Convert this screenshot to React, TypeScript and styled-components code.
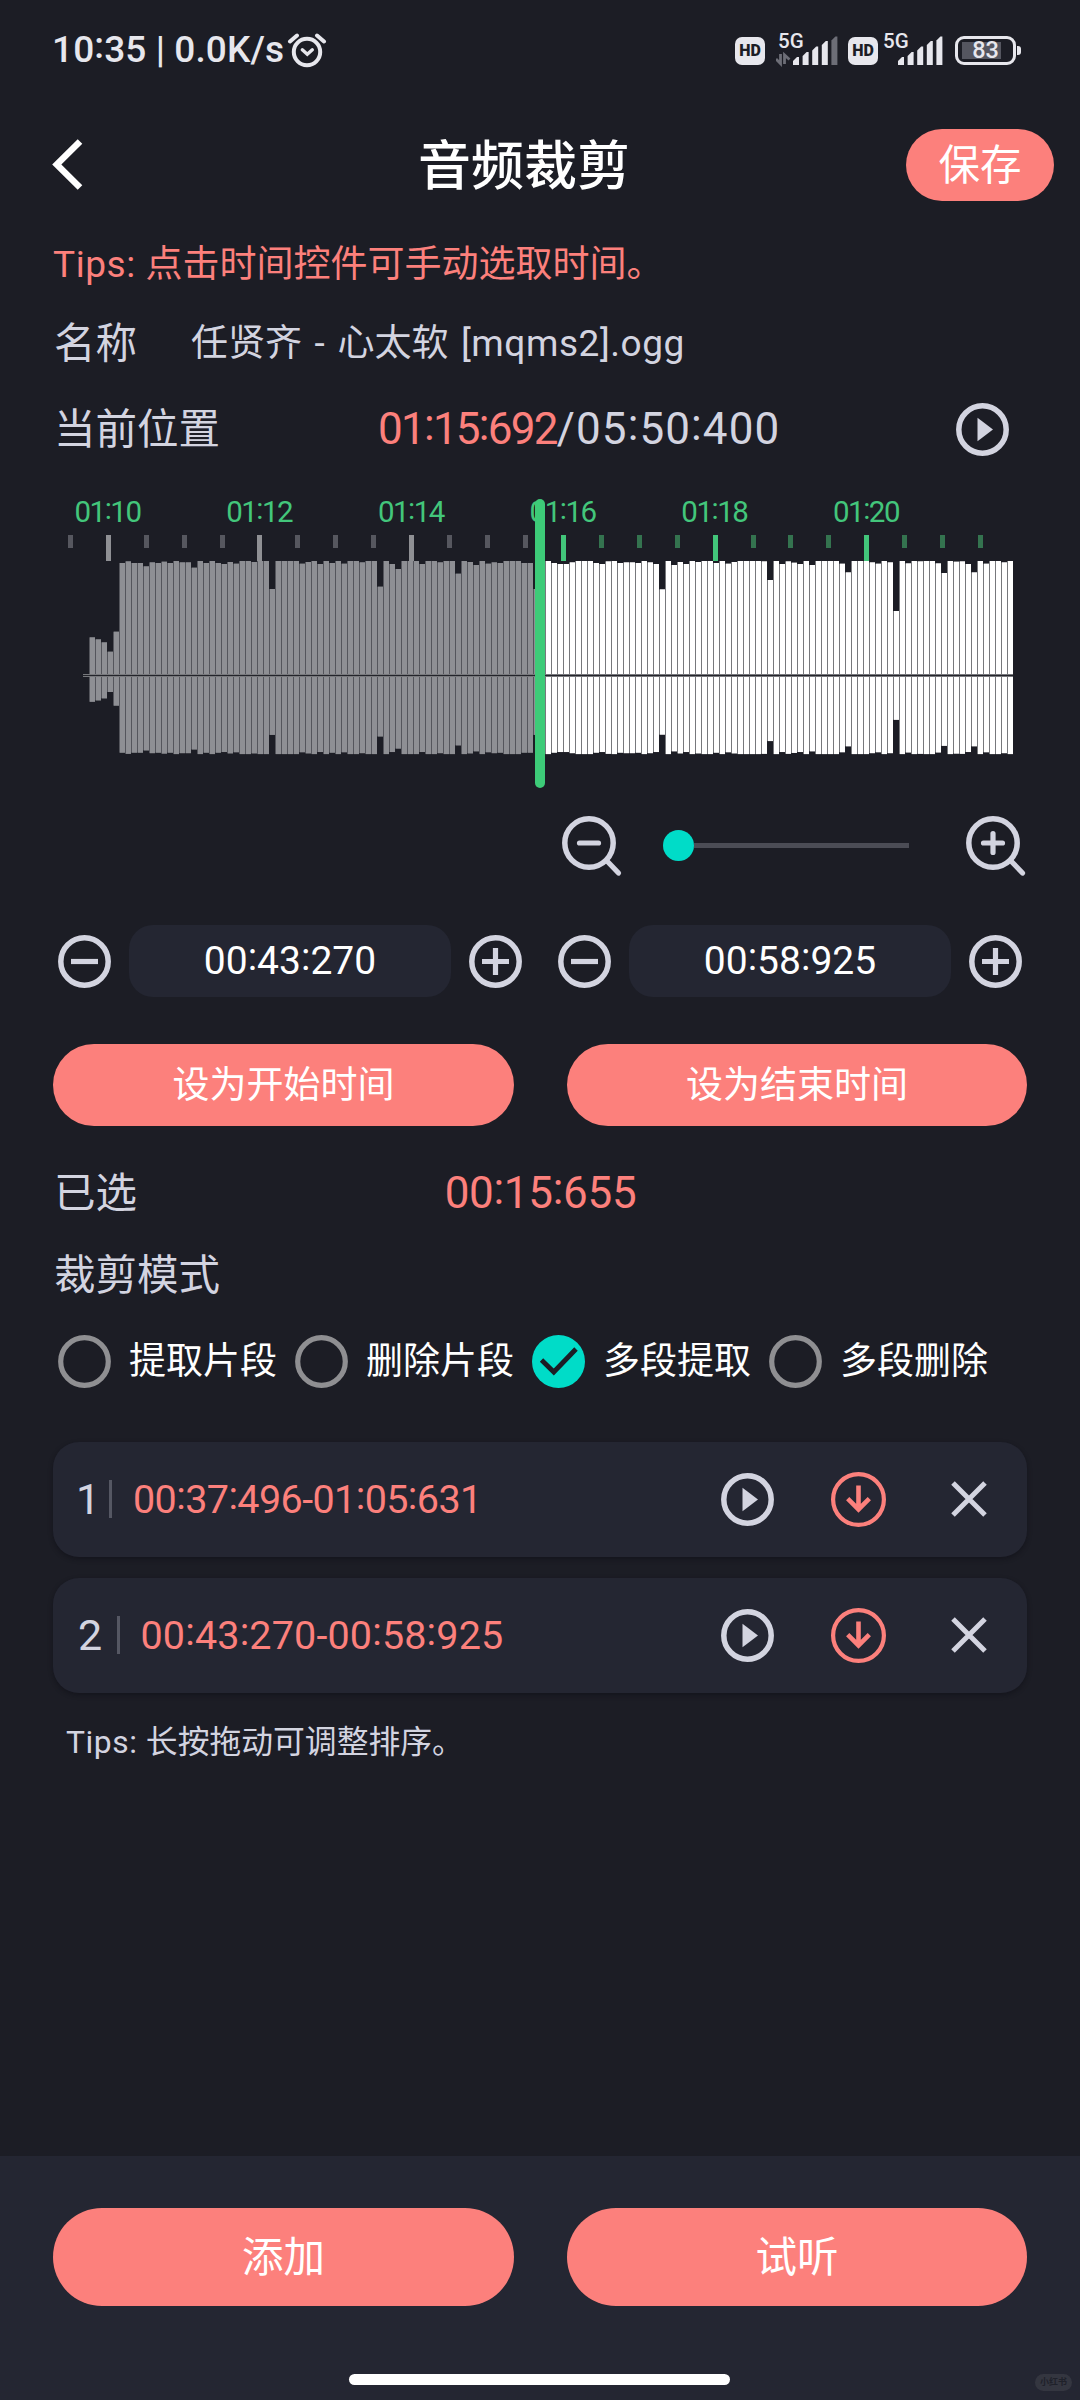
import React, { useState } from "react";
import styled, { createGlobalStyle, css } from "styled-components";

const color = {
  bg: "#1c1d25",
  panel: "#242632",
  coral: "#fc807c",
  text: "#d3d4e0",
  green: "#3dcb78",
  teal: "#00dcc8",
  ring: "#8f8f92",
};

const GlobalStyle = createGlobalStyle`
  html, body { margin: 0; padding: 0; background: ${color.bg}; }
  * { box-sizing: border-box; }
  button { font: inherit; color: inherit; border: 0; padding: 0; background: none; }
`;

const Screen = styled.main`
  display: flex;
  flex-direction: column;
  width: 1080px;
  height: 2400px;
  overflow: hidden;
  background: ${color.bg};
  color: ${color.text};
  font-family: Roboto, "Noto Sans CJK SC", sans-serif;
  font-size: 37px;
  line-height: 1.2;
  white-space: nowrap;
`;

/* ---------- status bar ---------- */

const StatusBar = styled.header`
  display: flex;
  align-items: center;
  height: 101px;
  padding: 0 59px 0 52px;
  color: #e7e7ed;
`;

const Clock = styled.span`
  font-size: 37px;
  font-weight: 500;
  letter-spacing: 0.1px;
  width: 235px;
`;

const StatusIcons = styled.div`
  display: flex;
  align-items: center;
  margin-left: auto;
`;

const HdBadge = styled.span<{ $after: number }>`
  display: grid;
  place-items: center;
  width: 30px;
  height: 28px;
  margin-right: ${(p) => p.$after}px;
  border-radius: 7px;
  background: #e7e7ed;
  color: ${color.bg};
  font-size: 16px;
  font-weight: 900;
  line-height: 1;
`;

const Signal = styled.div<{ $w: number; $after: number }>`
  position: relative;
  width: ${(p) => p.$w}px;
  height: 34px;
  margin-right: ${(p) => p.$after}px;
  svg { display: block; }
`;

const Network = styled.span<{ $left: number }>`
  position: absolute;
  top: -3px;
  left: ${(p) => p.$left}px;
  font-size: 20.5px;
  font-weight: 500;
  line-height: 20px;
`;

const Battery = styled.div`
  display: grid;
  place-items: center;
  width: 61px;
  height: 29px;
  border: 3px solid #e7e7ed;
  border-radius: 9px;
  background: linear-gradient(#555660, #555660) 4px center / 39px 17px no-repeat;
  font-size: 23.5px;
  font-weight: 500;
  line-height: 23px;
`;

const BatteryTip = styled.span`
  width: 4px;
  height: 9px;
  margin-left: 1px;
  border-radius: 0 3px 3px 0;
  background: #e7e7ed;
`;

/* ---------- title bar ---------- */

const TitleBar = styled.div`
  display: flex;
  align-items: center;
  height: 128px;
  padding: 0 26px 0 52px;
`;

const Title = styled.h1`
  flex: 1;
  margin: 0;
  padding: 3px 0 0 29px;
  margin-right: -27px;
  color: #fff;
  font-size: 53px;
  font-weight: 500;
  line-height: 60px;
  padding-left: 334px;
`;

const Pill = styled.button<{ $w: number; $h: number; $size: number }>`
  display: flex;
  align-items: center;
  justify-content: center;
  width: ${(p) => p.$w}px;
  height: ${(p) => p.$h}px;
  padding-top: 2px;
  border-radius: ${(p) => p.$h / 2}px;
  background: ${color.coral};
  color: #fff;
  font-size: ${(p) => p.$size}px;
`;

/* ---------- info rows ---------- */

const Row = styled.section<{ $h: number; $top?: number }>`
  display: flex;
  align-items: center;
  height: ${(p) => p.$h}px;
  padding: ${(p) => p.$top ?? 0}px 53px 0;
`;

const Label = styled.span<{ $w?: number }>`
  width: ${(p) => (p.$w ? `${p.$w}px` : "auto")};
  padding: 2px 0 0 1px;
  font-size: 41.5px;
`;

const Hint = styled.p<{ $small?: boolean }>`
  margin: 0;
  padding-top: 2px;
  ${(p) =>
    p.$small
      ? css`
          padding-left: 13px;
          font-size: 31.8px;
        `
      : css`
          color: ${color.coral};
          font-size: 37px;
        `}
`;

const FileName = styled.span`
  padding-top: 2px;
  font-size: 37px;
  word-spacing: 3.4px;
`;

const Latin = styled.span`
  letter-spacing: 0.55px;
`;

const Time = styled.span<{ $size: number; $coral?: boolean; $spacing?: number }>`
  padding-top: 1px;
  color: ${(p) => (p.$coral ? color.coral : "inherit")};
  font-size: ${(p) => p.$size}px;
  letter-spacing: ${(p) => p.$spacing ?? 0}px;
`;

const Colon = styled.span`
  line-height: 0;
  vertical-align: 0.1em;
`;

const IconButton = styled.button<{ $tone?: string }>`
  display: grid;
  place-items: center;
  color: ${(p) => p.$tone ?? color.text};
  svg { display: block; overflow: visible; }
`;

const End = styled.div`
  margin-left: auto;
  margin-right: 18px;
`;

/* ---------- waveform ---------- */

const WaveBox = styled.section`
  height: 330px;
  svg { display: block; }
`;

const ZoomRow = styled.section`
  display: flex;
  align-items: center;
  height: 89px;
  padding: 0 0 0 562px;
`;

const Slider = styled.div`
  display: flex;
  align-items: center;
  width: 246px;
  margin: 0 57px 0 41px;
`;

const Thumb = styled.span`
  width: 31px;
  height: 31px;
  border-radius: 50%;
  background: ${color.teal};
`;

const Track = styled.span`
  flex: 1;
  height: 5px;
  background: #4b4c55;
`;

/* ---------- steppers ---------- */

const StepperRow = styled.section`
  display: flex;
  align-items: center;
  gap: 36px;
  height: 142px;
  padding: 0 58px;
`;

const Stepper = styled.div`
  display: flex;
  align-items: center;
  gap: 18px;
`;

const Field = styled.div`
  display: grid;
  place-items: center;
  width: 322px;
  height: 72px;
  border-radius: 24px;
  background: ${color.panel};
  color: #fff;
`;

const ButtonRow = styled.section`
  display: flex;
  justify-content: space-between;
  margin-top: 12px;
  padding: 0 53px;
`;

const Centered = styled.div`
  flex: 1;
  padding-top: 2px;
  text-align: center;
  padding-right: 82px;
`;

/* ---------- cut modes ---------- */

const Modes = styled.section`
  display: grid;
  grid-template-columns: repeat(4, 237px);
  align-items: center;
  height: 89px;
  padding-left: 58px;
`;

const Mode = styled.label`
  display: flex;
  align-items: center;
  gap: 18px;
  color: #fff;
  font-size: 37px;
  svg { display: block; }
`;

const ModeName = styled.span`
  padding-top: 2px;
`;

/* ---------- clips ---------- */

const Clips = styled.section`
  display: flex;
  flex-direction: column;
  gap: 21.5px;
  margin: 36px 53px 0;
`;

const Clip = styled.article`
  display: flex;
  align-items: center;
  height: 114.5px;
  padding: 0 40px 0 26px;
  border-radius: 26px;
  background: ${color.panel};
  box-shadow: 0 2px 5px rgba(10, 11, 18, 0.45);
`;

const ClipIndex = styled.span<{ $w: number; $indent: number }>`
  width: ${(p) => p.$w}px;
  padding-top: 1px;
  font-size: 43px;
  text-indent: ${(p) => p.$indent}px;
`;

const Divider = styled.span`
  width: 3px;
  height: 38px;
  margin-right: 21px;
  background: #555763;
`;

const Actions = styled.div`
  display: grid;
  grid-template-columns: 53px 55px 44px;
  align-items: center;
  justify-items: end;
  column-gap: 57px;
  margin-left: auto;
`;

/* ---------- footer ---------- */

const Footer = styled.footer`
  position: relative;
  display: flex;
  flex-direction: column;
  height: 244px;
  margin-top: auto;
  padding-top: 52px;
  background: ${color.panel};
`;

const FooterButtons = styled.div`
  display: flex;
  justify-content: space-between;
  padding: 0 53px;
`;

const HomeBar = styled.span`
  align-self: center;
  width: 381px;
  height: 11px;
  margin: 68px 1px 0 0;
  border-radius: 6px;
  background: #fff;
`;

const Watermark = styled.span`
  position: absolute;
  right: 8px;
  bottom: 9px;
  width: 37px;
  height: 17px;
  border-radius: 9px;
  background: #343640;
  color: #1f212a;
  font-size: 9px;
  font-weight: 700;
  line-height: 17px;
  text-align: center;
`;

/* ---------- icons ---------- */

const AlarmIcon = () => (
  <svg width="40" height="36" viewBox="288 32 40 36" fill="none" stroke="#e7e7ed" strokeWidth="4">
    <circle cx="308" cy="51" r="13.2" />
    <path d="M291 40.5l7-6M325 40.5l-7-6" strokeLinecap="round" />
    <path d="M303.3 48.8l5 4.4 5-4.4" strokeWidth="3.4" strokeLinecap="round" />
  </svg>
);

const BARS = [8, 13, 18.5, 24, 28.5];

const SignalBars = ({ dim, x, arrows }: { dim?: boolean; x: number; arrows?: boolean }) => (
  <svg width={x + 45} height="34" fill="#e7e7ed">
    {BARS.map((h, i) => {
      const left = x + i * 9.6;
      const top = 31 - h;
      return (
        <path
          key={h}
          d={`M${left} 31V${top + 4}L${left + 4} ${top}H${left + 6}V31Z`}
          fill={dim && i === 4 ? "#6d6e77" : "#e7e7ed"}
        />
      );
    })}
    {arrows && (
      <path d="M0 25l4.5 4.5V20M8.500 30V21l5 4.500" fill="none" stroke="#6d6e77" strokeWidth="2.8" />
    )}
  </svg>
);

const BackIcon = () => (
  <svg width="32" height="54" viewBox="0 0 32 54" fill="none" stroke="#fff" strokeWidth="6.5">
    <path d="M28 3.500L4.800 26.500L28 49.500" />
  </svg>
);

const PlayIcon = () => (
  <svg width="53" height="53" viewBox="0 0 53 53">
    <circle cx="26.5" cy="26.500" r="23.700" fill="none" stroke="currentColor" strokeWidth="5.5" />
    <path d="M21.500 14.700L37 26.500L21.500 38.300Z" fill="currentColor" />
  </svg>
);

const StepIcon = ({ plus }: { plus?: boolean }) => (
  <svg width="53" height="53" viewBox="0 0 53 53" fill="none" stroke="currentColor" strokeWidth="5.5">
    <circle cx="26.5" cy="26.500" r="23.700" />
    <path d={plus ? "M13 26.500H40M26.500 13V40" : "M13 26.500H40"} strokeWidth="5.2" />
  </svg>
);

const ZoomIcon = ({ plus }: { plus?: boolean }) => (
  <svg width="60" height="60" viewBox="0 0 60 60" fill="none" stroke="currentColor" strokeWidth="5.5">
    <circle cx="27" cy="27" r="24.200" />
    <path
      d={plus ? "M17.500 27H36.500M27 17.500V36.500" : "M17.500 27H36.500"}
      strokeLinecap="round"
      strokeWidth="5.200"
    />
    <path d="M45 45L56.500 57" strokeLinecap="round" strokeWidth="5.2" />
  </svg>
);

const DownloadIcon = () => (
  <svg width="55" height="55" viewBox="0 0 55 55" fill="none" stroke="currentColor" strokeWidth="4.2">
    <circle cx="27.5" cy="27.5" r="25.400" />
    <path d="M27.500 13.500V38M16.700 26.700L27.500 37.500L38.300 26.700" strokeWidth="4.600" />
  </svg>
);

const CloseIcon = () => (
  <svg width="36" height="36" viewBox="0 0 36 36" fill="none" stroke="currentColor" strokeWidth="5">
    <path d="M2 2L34 34M34 2L2 34" />
  </svg>
);

const RadioIcon = ({ checked }: { checked: boolean }) => (
  <svg width="53" height="53" viewBox="0 0 53 53" fill="none">
    {checked ? (
      <>
        <circle cx="26.500" cy="26.500" r="26.500" fill={color.teal} />
        <path d="M9.500 25L21.800 37L44 14" stroke={color.bg} strokeWidth="4.800" />
      </>
    ) : (
      <circle cx="26.500" cy="26.500" r="23.800" stroke={color.ring} strokeWidth="5.200" />
    )}
  </svg>
);

/* ---------- waveform drawing ---------- */

// How far each sample falls short of full amplitude, in thirds of a pixel.
const FULL = 342;
const DROPS = [
  340, 229, 235, 244, 272, 212, 6, 1, 6, 6, 16, 4, 6, 2, 6, 0, 4, 4, 20, 0, 6, 0, 6, 9, 3, 8, 0, 0, 3,
  0, 0, 84, 0, 0, 0, 0, 8, 3, 0, 9, 0, 6, 0, 8, 0, 0, 4, 0, 0, 77, 0, 9, 24, 0, 0, 0, 9, 0, 0, 4, 0, 0,
  38, 0, 3, 12, 0, 8, 4, 6, 0, 0, 0, 6, 6, 84, 0, 0, 6, 9, 9, 4, 0, 0, 0, 6, 9, 1, 0, 6, 4, 4, 6, 0, 4,
  9, 85, 0, 12, 3, 9, 0, 3, 0, 0, 6, 0, 8, 3, 0, 0, 0, 0, 1, 57, 0, 9, 1, 5, 9, 0, 12, 0, 0, 0, 0, 8,
  34, 0, 0, 0, 4, 8, 0, 4, 150, 0, 7, 0, 1, 0, 0, 7, 36, 0, 2, 1, 9, 34, 0, 8, 0, 0, 4, 0,
];
const WAVE_LEFT = 83;
const STEP = 6;
const AXIS = 195;
const HEAD = 540;

const Waveform = () => (
  <svg width="1080" height="330" viewBox="0 -9 1080 330">
    {DROPS.map((drop, i) => {
      const x = WAVE_LEFT + i * STEP;
      const played = x < HEAD;
      const up = (FULL - drop) / 3;
      const down = up * 0.685;
      const edge = played ? "#54555c" : "#77787c";
      return (
        <g key={i}>
          <rect x={x} y={AXIS - up} width={STEP} height={up + down + 1} fill={edge} />
          <rect x={x + 1} y={AXIS - up} width={STEP - 1} height={up + down + 1} fill={played ? "#8e8f94" : "#fff"} />
        </g>
      );
    })}
    <rect x={WAVE_LEFT} y={AXIS - 1} width={930} height={3} fill="#77787c" />
    <rect x={WAVE_LEFT} y={AXIS} width={930} height={1} fill="#23242b" />
    {Array.from({ length: 25 }, (_, i) => {
      const x = 70.3 + i * 37.93;
      const major = i % 4 === 1;
      const played = x < HEAD;
      const fill = major ? (played ? "#8f9094" : "#42c57a") : played ? "#56575f" : "#34734f";
      return <rect key={i} x={Math.round(x - 2.5)} y={55} width={5} height={major ? 26 : 13} fill={fill} />;
    })}
    <g fill="#43c67b" fontSize="29.5" fontFamily="Roboto, sans-serif" textAnchor="middle" letterSpacing="-1.5">
      {["10", "12", "14", "16", "18", "20"].map((sec, i) => (
        <text key={sec} x={107.5 + i * 151.7} y={42}>
          01<tspan dy="-3">:</tspan><tspan dy="3">{sec}</tspan>
        </text>
      ))}
    </g>
    <rect x={HEAD - 5} y={19} width={10} height={289} rx={5} fill={color.green} />
  </svg>
);

const renderTime = (value: string) =>
  value.split(":").map((part, i) => (
    <React.Fragment key={i}>
      {i > 0 && <Colon>:</Colon>}
      {part}
    </React.Fragment>
  ));

const MODES = ["提取片段", "删除片段", "多段提取", "多段删除"];
const CLIPS = [
  { range: "00:37:496-01:05:631", indexWidth: 30, indent: -3, spacing: -0.6 },
  { range: "00:43:270-00:58:925", indexWidth: 37.5, indent: -1, spacing: 0.15 },
];

export default function App() {
  const [mode, setMode] = useState(2);

  return (
    <Screen>
      <GlobalStyle />
      <StatusBar>
        <Clock>{renderTime("10:35 | 0.0K/s")}</Clock>
        <AlarmIcon />
        <StatusIcons>
          <HdBadge $after={11}>HD</HdBadge>
          <Signal $w={61} $after={11}>
            <Network $left={2}>5G</Network>
            <SignalBars x={17} dim arrows />
          </Signal>
          <HdBadge $after={5}>HD</HdBadge>
          <Signal $w={60} $after={12}>
            <Network $left={0}>5G</Network>
            <SignalBars x={15} />
          </Signal>
          <Battery>83</Battery>
          <BatteryTip />
        </StatusIcons>
      </StatusBar>

      <TitleBar>
        <BackIcon />
        <Title>音频裁剪</Title>
        <Pill $w={148} $h={72} $size={41.5}>保存</Pill>
      </TitleBar>

      <Row $h={70}>
        <Hint><Latin>Tips: </Latin>点击时间控件可手动选取时间。</Hint>
      </Row>
      <Row $h={88}>
        <Label $w={138}>名称</Label>
        <FileName>任贤齐 - 心太软 <Latin>[mqms2].ogg</Latin></FileName>
      </Row>
      <Row $h={84}>
        <Label $w={325}>当前位置</Label>
        <Time $size={44} $spacing={1.1}>
          <Time $size={44} $coral $spacing={-1.75}>{renderTime("01:15:692")}</Time>/{renderTime("05:50:400")}
        </Time>
        <End>
          <IconButton aria-label="播放"><PlayIcon /></IconButton>
        </End>
      </Row>

      <WaveBox>
        <Waveform />
      </WaveBox>

      <ZoomRow>
        <IconButton aria-label="缩小"><ZoomIcon /></IconButton>
        <Slider>
          <Thumb />
          <Track />
        </Slider>
        <IconButton aria-label="放大"><ZoomIcon plus /></IconButton>
      </ZoomRow>

      <StepperRow>
        {["00:43:270", "00:58:925"].map((value) => (
          <Stepper key={value}>
            <IconButton aria-label="减少"><StepIcon /></IconButton>
            <Field>
              <Time $size={39}>{renderTime(value)}</Time>
            </Field>
            <IconButton aria-label="增加"><StepIcon plus /></IconButton>
          </Stepper>
        ))}
      </StepperRow>

      <ButtonRow>
        <Pill $w={461} $h={82} $size={37}>设为开始时间</Pill>
        <Pill $w={460} $h={82} $size={37}>设为结束时间</Pill>
      </ButtonRow>

      <Row $h={107} $top={26}>
        <Label $w={83}>已选</Label>
        <Centered>
          <Time $size={44} $coral $spacing={-0.3}>{renderTime("00:15:655")}</Time>
        </Centered>
      </Row>
      <Row $h={84}>
        <Label>裁剪模式</Label>
      </Row>

      <Modes>
        {MODES.map((name, i) => (
          <Mode key={name} onClick={() => setMode(i)}>
            <RadioIcon checked={mode === i} />
            <ModeName>{name}</ModeName>
          </Mode>
        ))}
      </Modes>

      <Clips>
        {CLIPS.map((clip, i) => (
          <Clip key={clip.range}>
            <ClipIndex $w={clip.indexWidth} $indent={clip.indent}>{i + 1}</ClipIndex>
            <Divider />
            <Time $size={39.5} $coral $spacing={clip.spacing}>{renderTime(clip.range)}</Time>
            <Actions>
              <IconButton aria-label="播放"><PlayIcon /></IconButton>
              <IconButton aria-label="下载" $tone={color.coral}><DownloadIcon /></IconButton>
              <IconButton aria-label="删除"><CloseIcon /></IconButton>
            </Actions>
          </Clip>
        ))}
      </Clips>
      <Row $h={97}>
        <Hint $small><Latin>Tips: </Latin>长按拖动可调整排序。</Hint>
      </Row>

      <Footer>
        <FooterButtons>
          <Pill $w={461} $h={98} $size={41.5}>添加</Pill>
          <Pill $w={460} $h={98} $size={41.5}>试听</Pill>
        </FooterButtons>
        <HomeBar />
        <Watermark>小红书</Watermark>
      </Footer>
    </Screen>
  );
}
